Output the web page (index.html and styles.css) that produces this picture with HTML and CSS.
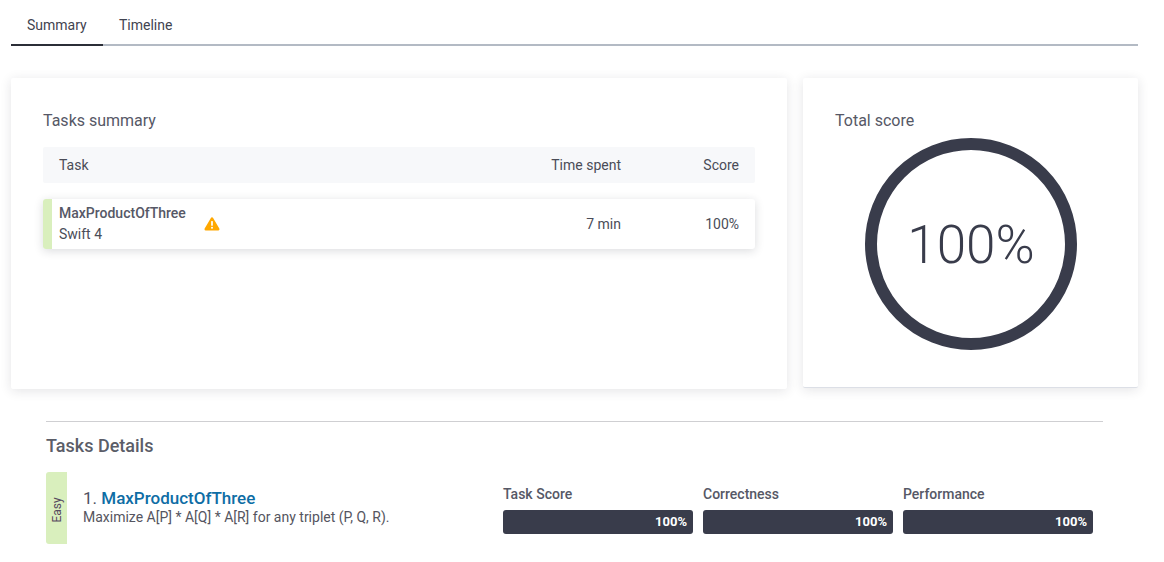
FILE: index.html
```html
<!DOCTYPE html>
<html lang="en">
<head>
<meta charset="utf-8">
<title>Summary</title>
<link rel="stylesheet" href="styles.css">
</head>
<body>
<nav class="tabs">
  <a class="tab tab-active">Summary</a>
  <a class="tab">Timeline</a>
</nav>
<main class="cards">
  <section class="card card-tasks">
    <h2 class="card-title">Tasks summary</h2>
    <div class="table-head">
      <span class="col-task">Task</span>
      <span class="col-time">Time spent</span>
      <span class="col-score">Score</span>
    </div>
    <div class="table-row">
      <div class="col-task task-cell">
        <div class="task-text">
          <div class="task-name">MaxProductOfThree</div>
          <div class="task-lang">Swift 4</div>
        </div>
        <svg class="warn" viewBox="0 0 16 16" width="16" height="16" aria-hidden="true">
          <path d="M8 2.6 L14.2 13.2 H1.8 Z" fill="#ffa800" stroke="#ffa800" stroke-width="2.6" stroke-linejoin="round"/>
          <rect x="7.15" y="5" width="1.7" height="4.8" rx=".6" fill="#fff"/>
          <circle cx="8" cy="11.7" r="1" fill="#fff"/>
        </svg>
      </div>
      <span class="col-time">7 min</span>
      <span class="col-score">100%</span>
    </div>
  </section>
  <section class="card card-score">
    <h2 class="card-title">Total score</h2>
    <div class="ring"><span class="ring-value">100%</span></div>
  </section>
</main>
<section class="details">
  <h2 class="details-title">Tasks Details</h2>
  <div class="detail-row">
    <div class="difficulty"><span>Easy</span></div>
    <div class="detail-info">
      <div class="detail-name">1. <a class="detail-link">MaxProductOfThree</a></div>
      <div class="detail-desc">Maximize A[P] * A[Q] * A[R] for any triplet (P, Q, R).</div>
    </div>
    <div class="metrics">
      <div class="metric"><div class="metric-label">Task Score</div><div class="metric-bar">100%</div></div>
      <div class="metric"><div class="metric-label">Correctness</div><div class="metric-bar">100%</div></div>
      <div class="metric"><div class="metric-label">Performance</div><div class="metric-bar">100%</div></div>
    </div>
  </div>
</section>
</body>
</html>
```
FILE: styles.css
```css
* { box-sizing: border-box; }
html, body { margin: 0; background: #fff; }
body {
  font-family: Roboto, "Liberation Sans", sans-serif;
  color: #4a4c57;
  font-size: 14px;
  height: 562px;
  overflow: hidden;
  padding: 0 26px 0 11px;
}
.tabs {
  display: flex;
  height: 46px;
  border-bottom: 2px solid #b3bac4;
}
.tab {
  height: 46px;
  padding: 17px 16px 0;
  line-height: 17px;
  font-size: 14px;
  color: #3f4350;
}
.tab-active { border-bottom: 2px solid #2b2e37; width: 92px; }
.cards {
  display: flex;
  gap: 16px;
  margin-top: 32px;
}
.card {
  background: #fff;
  border-radius: 2px;
  box-shadow: 0 2px 12px rgba(30, 35, 50, .12);
}
.card-tasks { width: 776px; height: 311px; padding: 33px 32px 0; }
.card-score { width: 335px; height: 310px; padding: 33px 32px 0; border-bottom: 1px solid #dcdfe6; }
.card-title {
  margin: 0;
  font-size: 16px;
  font-weight: 400;
  line-height: 19px;
  color: #565866;
}
.table-head, .table-row {
  display: flex;
  align-items: center;
  padding-left: 16px;
  padding-right: 16px;
}
.table-head {
  margin-top: 17px;
  height: 36px;
  background: #f7f8fa;
  border-radius: 2px;
}
.table-row {
  margin-top: 16px;
  height: 50px;
  border-left: 9px solid #d9efbd;
  padding-left: 7px;
  border-radius: 3px;
  box-shadow: 0 2px 10px rgba(30, 35, 50, .16);
}
.col-task { flex: 1; }
.col-time { width: 120px; text-align: right; }
.col-score { width: 118px; text-align: right; }
.task-cell { display: flex; align-items: center; }
.task-text { margin-top: -2px; }
.task-name { line-height: 18px; font-weight: 500; color: #565866; }
.task-lang { line-height: 18px; margin-top: 3px; font-size: 14px; }
.warn { margin-left: 18px; }
.ring {
  width: 212px;
  height: 212px;
  margin: 8px 0 0 30px;
  padding-top: 2px;
  border: 12.5px solid #393c4b;
  border-radius: 50%;
  display: flex;
  align-items: center;
  justify-content: center;
}
.ring-value {
  font-size: 53px;
  font-weight: 300;
  color: #393c4b;
  line-height: 1;
}
.details {
  margin: 32px 35px 0;
  border-top: 1px solid #cfcfd2;
}
.details-title {
  margin: 13px 0 0;
  font-size: 18px;
  font-weight: 500;
  line-height: 21px;
  color: #5b5d68;
}
.detail-row {
  display: flex;
  margin-top: 16px;
  height: 72px;
}
.difficulty {
  width: 21px;
  height: 72px;
  padding-top: 4px;
  background: #d9efbd;
  border-radius: 3px 0 0 3px;
  display: flex;
  align-items: center;
  justify-content: center;
  font-size: 12px;
  color: #574a60;
}
.difficulty span { transform: rotate(-90deg); display: block; }
.detail-info { margin-left: 16px; width: 420px; padding-top: 16px; }
.detail-name { font-size: 17px; line-height: 20px; color: #4f5160; }
.detail-link { color: #0e6da5; font-weight: 500; }
.detail-desc { font-size: 14px; line-height: 17px; margin-top: 1px; color: #555560; }
.metrics { display: flex; gap: 10px; margin-top: 14px; }
.metric { width: 190px; }
.metric-label { font-size: 14px; line-height: 17px; color: #565866; font-weight: 500; }
.metric-bar {
  margin-top: 7px;
  height: 24px;
  background: #393c4b;
  border-radius: 3px;
  color: #fff;
  font-size: 13px;
  font-weight: 700;
  line-height: 24px;
  text-align: right;
  padding-right: 6px;
}
```
